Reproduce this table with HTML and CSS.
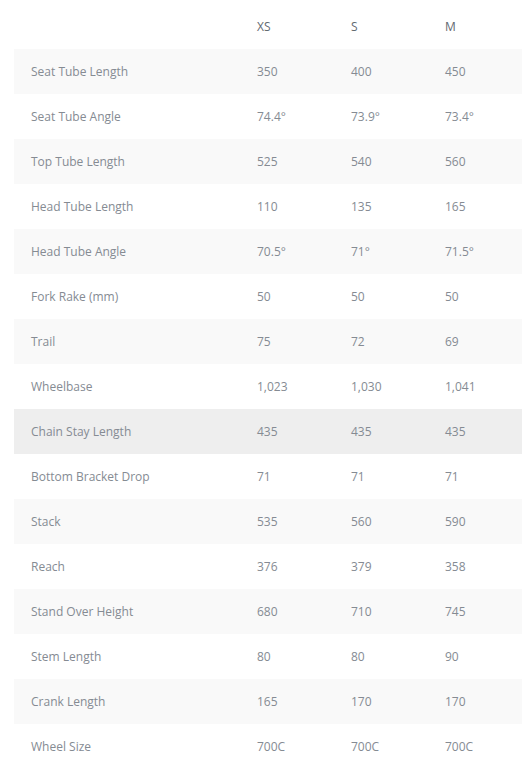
FILE: index.html
```html
<!DOCTYPE html>
<html>
<head>
<meta charset="utf-8">
<link rel="stylesheet" href="styles.css">
</head>
<body>
<table class="geo">
  <thead>
    <tr><th class="label"></th><th>XS</th><th>S</th><th>M</th></tr>
  </thead>
  <tbody>
    <tr><td class="label">Seat Tube Length</td><td>350</td><td>400</td><td>450</td></tr>
    <tr><td class="label">Seat Tube Angle</td><td>74.4°</td><td>73.9°</td><td>73.4°</td></tr>
    <tr><td class="label">Top Tube Length</td><td>525</td><td>540</td><td>560</td></tr>
    <tr><td class="label">Head Tube Length</td><td>110</td><td>135</td><td>165</td></tr>
    <tr><td class="label">Head Tube Angle</td><td>70.5°</td><td>71°</td><td>71.5°</td></tr>
    <tr><td class="label">Fork Rake (mm)</td><td>50</td><td>50</td><td>50</td></tr>
    <tr><td class="label">Trail</td><td>75</td><td>72</td><td>69</td></tr>
    <tr><td class="label">Wheelbase</td><td>1,023</td><td>1,030</td><td>1,041</td></tr>
    <tr class="hover"><td class="label">Chain Stay Length</td><td>435</td><td>435</td><td>435</td></tr>
    <tr><td class="label">Bottom Bracket Drop</td><td>71</td><td>71</td><td>71</td></tr>
    <tr><td class="label">Stack</td><td>535</td><td>560</td><td>590</td></tr>
    <tr><td class="label">Reach</td><td>376</td><td>379</td><td>358</td></tr>
    <tr><td class="label">Stand Over Height</td><td>680</td><td>710</td><td>745</td></tr>
    <tr><td class="label">Stem Length</td><td>80</td><td>80</td><td>90</td></tr>
    <tr><td class="label">Crank Length</td><td>165</td><td>170</td><td>170</td></tr>
    <tr><td class="label">Wheel Size</td><td>700C</td><td>700C</td><td>700C</td></tr>
  </tbody>
</table>
</body>
</html>
```
FILE: styles.css
```css
html, body {
  margin: 0;
  padding: 0;
  background: #fff;
}
body {
  padding: 0 8px 0 14px;
  font-family: "Open Sans", "DejaVu Sans", sans-serif;
  font-size: 12px;
  color: #858b93;
}
.geo {
  width: 508px;
  border-collapse: collapse;
  table-layout: fixed;
}
.geo th, .geo td {
  padding: 0 0 0 17px;
  text-align: left;
  font-weight: normal;
  vertical-align: middle;
  white-space: nowrap;
}
.geo th {
  height: 45px;
  padding-top: 4px;
  color: #626971;
}
.geo td {
  height: 45px;
}
.geo .label {
  width: 209px;
}
.geo tbody tr:nth-child(odd) {
  background: #f9f9f9;
}
.geo tbody tr.hover {
  background: #eeeeee;
}
```
